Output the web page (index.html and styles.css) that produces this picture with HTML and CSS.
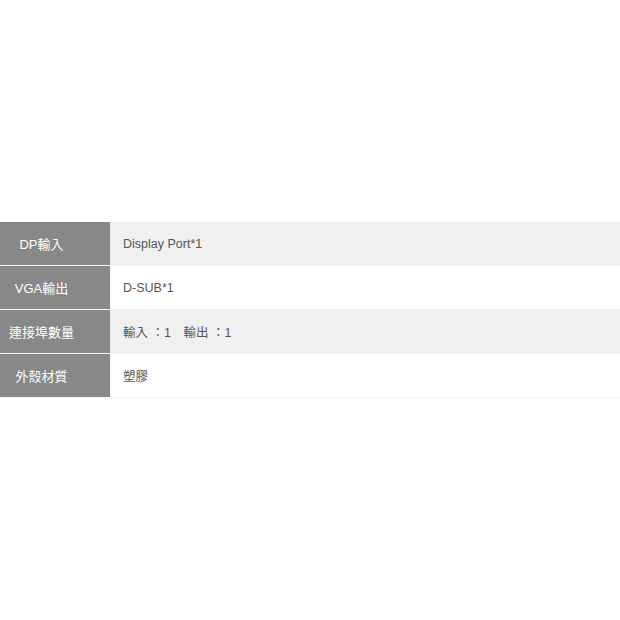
FILE: index.html
```html
<!DOCTYPE html>
<html lang="zh-Hant">
<head>
<meta charset="utf-8">
<link rel="stylesheet" href="styles.css">
</head>
<body>
<div class="spec">
  <div class="row alt"><div class="label">DP輸入</div><div class="value">Display Port*1</div></div>
  <div class="row"><div class="label">VGA輸出</div><div class="value">D-SUB*1</div></div>
  <div class="row alt"><div class="label">連接埠數量</div><div class="value">輸入 ：1　輸出 ：1</div></div>
  <div class="row"><div class="label">外殼材質</div><div class="value">塑膠</div></div>
</div>
</body>
</html>
```
FILE: styles.css
```css
html, body {
  margin: 0;
  padding: 0;
  background: #fff;
}
body {
  width: 620px;
  height: 620px;
  font-family: "Liberation Sans", "Noto Sans CJK TC", sans-serif;
}
.spec {
  padding-top: 222px;
}
.row {
  display: flex;
  height: 43px;
  border-bottom: 1px solid #f4f4f4;
}
.label {
  width: 83px;
  padding-right: 27px;
  background: #888888;
  color: #fff;
  font-size: 13px;
  display: flex;
  align-items: center;
  justify-content: center;
}
.value {
  flex: 1;
  display: flex;
  align-items: center;
  padding-left: 13px;
  font-size: 12.5px;
  color: #555;
  background: #fff;
}
.row.alt .value {
  background: #f0f0f0;
}
```
